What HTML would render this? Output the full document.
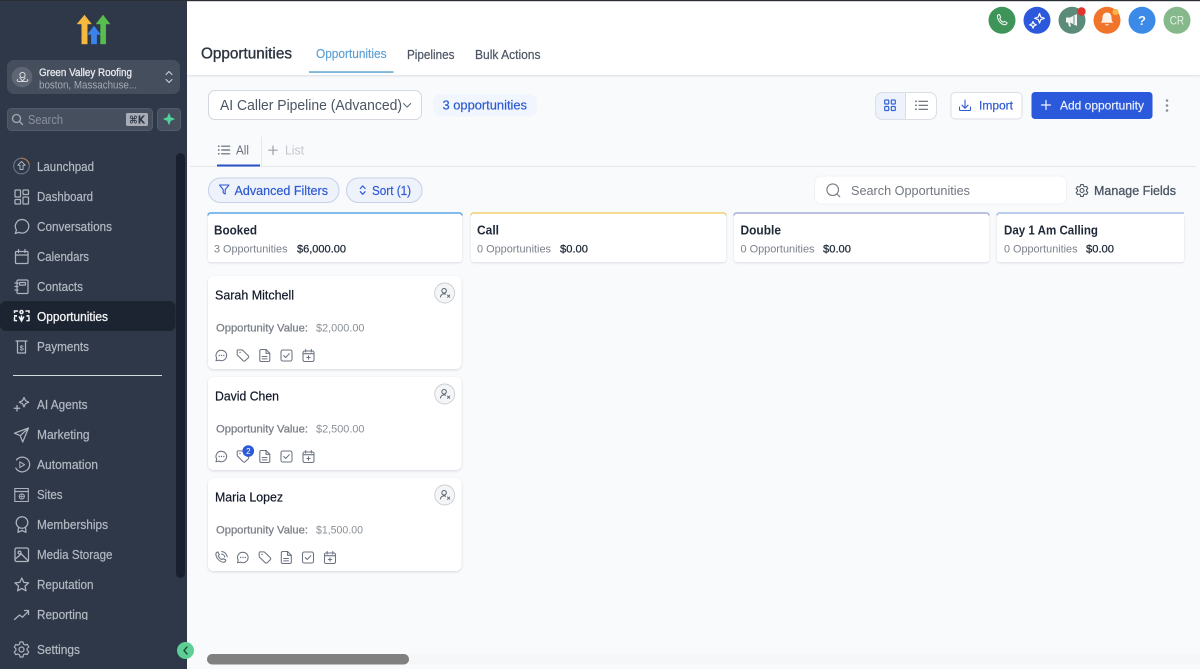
<!DOCTYPE html>
<html lang="en">
<head>
<meta charset="utf-8">
<title>Opportunities</title>
<style>
html,body{margin:0;padding:0;width:1200px;height:669px;overflow:hidden;background:#f9fafc}
svg{display:block;filter:blur(.3px)}
text{font-family:"Liberation Sans",sans-serif;white-space:pre}
.nav{font-size:13px;fill:#b4bac4;stroke:#b4bac4;stroke-width:.2}
.ic{fill:none;stroke:#aeb4bf;stroke-width:1.25;stroke-linecap:round;stroke-linejoin:round}
.ci{fill:none;stroke:#6b7280;stroke-width:1.05;stroke-linecap:round;stroke-linejoin:round}
.blue{fill:#2f5bd3;stroke:#2f5bd3;stroke-width:.2}
.tt{font-size:13px;font-weight:700;fill:#1f2937}
.sub{font-size:11px;fill:#7b818b}
.amt{font-size:11px;fill:#1f2937;stroke:#1f2937;stroke-width:.25}
.nm{font-size:13px;fill:#111827;stroke:#111827;stroke-width:.2}
.ov{font-size:11px;fill:#7d828a;stroke:#7d828a;stroke-width:.3}
.vv{font-size:11px;fill:#8a8f97}
</style>
</head>
<body>
<svg xmlns="http://www.w3.org/2000/svg" width="1200" height="669" viewBox="0 0 1200 669">
<defs>
<filter id="sh" x="-5%" y="-20%" width="110%" height="140%"><feDropShadow dx="0" dy="1" stdDeviation="1.2" flood-color="#101828" flood-opacity=".14"/></filter>
<filter id="hs" x="-2%" y="-20%" width="104%" height="140%"><feDropShadow dx="0" dy="1" stdDeviation="1" flood-color="#101828" flood-opacity=".12"/></filter>
<g id="chat"><path d="M0-5.2a5.2 5.2 0 1 1-2.5 9.800L-5.500 5.300l.7-2.700A5.200 5.200 0 0 1 0-5.200z"/><path d="M-2.300 0h.01M0 0h.01M2.300 0h.01" stroke-width="1.400"/></g>
<g id="tag"><path d="M-5.800-4.600a1 1 0 0 1 1-1H-1.300a1.500 1.500 0 0 1 1 .4L5.300.200a1.400 1.400 0 0 1 0 2L2.200 5.300a1.400 1.400 0 0 1-2 0L-5.400-.300a1.500 1.500 0 0 1-.4-1z"/><path d="M-3-3h.01" stroke-width="1.400"/></g>
<g id="doc"><path d="M-4-6H1L4.800-2.200V4.500A1.500 1.500 0 0 1 3.300 6H-4A1.500 1.500 0 0 1-5.200 4.500V-4.500A1.500 1.500 0 0 1-4-6z"/><path d="M1-6v3.800h3.800M-2.800 1h4.800M-2.800 3.400h4.800"/></g>
<g id="chk"><rect x="-5.500" y="-5.500" width="11" height="11" rx="1.800"/><path d="M-2.800 0l2 2 3.600-3.800"/></g>
<g id="cal"><rect x="-5.500" y="-4.500" width="11" height="10.500" rx="1.600"/><path d="M-5.500-1.800H5.500M-2.800-6v2.500M2.800-6v2.500M0 .3v3.400M-1.700 2H1.700"/></g>
<g id="phn"><path d="M-5.600-3.800c.3-1 1.200-1.700 2-1.700l1.400 2.700-1 1.100c.6 1.700 2 3.100 3.700 3.800l1.100-1L4.300 2.500c0 1-.7 1.900-1.700 2.200C-1.500 5-6 .200-5.600-3.800z"/><path d="M0-3.500A3.500 3.500 0 0 1 3.200-.4M.2-6A6 6 0 0 1 5.700-.6"/></g>
<g id="usr"><circle cx="-1" cy="-2.500" r="2.500"/><path d="M-5 4.500c0-2.300 1.800-3.500 4-3.500 .7 0 1.200.1 1.700.3M2.800 2.300l2.400 2.400M5.200 2.300L2.800 4.700"/></g>
<g id="gear"><circle r="2"/><path d="M-1.200-6h2.400l.4 1.700 1.300.7 1.700-.5 1.200 2.100-1.300 1.200v1.500l1.300 1.200-1.200 2.100-1.700-.5-1.300.7L1.200 6h-2.400l-.4-1.700-1.300-.7-1.700.5-1.200-2.100 1.300-1.200v-1.500l-1.300-1.200 1.200-2.100 1.700.5 1.300-.7z"/></g>
<g id="lst"><path d="M-2.500-4H6M-2.500 0H6M-2.500 4H6"/><path d="M-5.500-4h.01M-5.500 0h.01M-5.500 4h.01" stroke-width="1.800"/></g>
</defs>

<rect width="1200" height="669" fill="#f9fafc"/>
<rect x="187" y="0" width="1013" height="75" fill="#fff" filter="url(#hs)"/>
<rect x="0" y="0" width="1200" height="1.200" fill="#2a2d33"/>

<!-- sidebar -->
<rect x="0" y="1" width="187" height="668" fill="#2f3848"/>

<!-- logo -->
<path d="M81.700 44V24H77L84.500 15 91.500 24H87.300v20z" fill="#f5b93f" stroke="#f5b93f" stroke-width=".4" stroke-linejoin="round"/>
<path d="M91.300 44V34.500H87.500L94 26l6.500 8.500H96.700V44z" fill="#3b82ea" stroke="#3b82ea" stroke-width=".4" stroke-linejoin="round"/>
<path d="M100.500 44V24H96L103 15l7 9H105.800v20z" fill="#58bd4f" stroke="#58bd4f" stroke-width=".4" stroke-linejoin="round"/>

<!-- location -->
<rect x="7" y="60" width="173" height="34" rx="7" fill="#454e5d"/>
<circle cx="22" cy="77" r="10.300" fill="#5e6674"/>
<g fill="none" stroke="#d5d8de" stroke-width="1"><circle cx="22.500" cy="75" r="2.600"/><path d="M22.500 81l-3-3.600M22.500 81l3-3.600M18 79.500c-1.300.4-1 2 .5 2h8c1.500 0 1.800-1.600.5-2"/></g>
<text x="39" y="76" font-size="11" fill="#e8eaee" stroke="#e8eaee" stroke-width=".3" textLength="93" lengthAdjust="spacingAndGlyphs">Green Valley Roofing</text>
<text x="39" y="88.500" font-size="11" fill="#a3a9b4" textLength="98" lengthAdjust="spacingAndGlyphs">boston, Massachuse...</text>
<path d="M166 74.500l3-3 3 3M166 79.500l3 3 3-3" fill="none" stroke="#d3d6dc" stroke-width="1" stroke-linecap="round" stroke-linejoin="round"/>

<!-- search -->
<rect x="7.500" y="108.500" width="145" height="22" rx="4" fill="#464f5e" stroke="#535c6b"/>
<circle cx="16.500" cy="118.500" r="4" fill="none" stroke="#a3a9b4" stroke-width="1.300"/>
<path d="M19.500 121.500l3 3" stroke="#a3a9b4" stroke-width="1.300" stroke-linecap="round"/>
<text x="28" y="124" font-size="13" fill="#8b919d" textLength="35" lengthAdjust="spacingAndGlyphs">Search</text>
<rect x="126" y="113" width="22" height="13" rx="1.500" fill="#a7acb5"/>
<text x="129" y="123.500" font-size="10.500" font-weight="700" fill="#2e3747" style="font-family:'DejaVu Sans',sans-serif" textLength="16" lengthAdjust="spacingAndGlyphs">⌘K</text>
<rect x="157.500" y="108.500" width="23" height="22" rx="4" fill="#464f5e" stroke="#535c6b"/>
<path d="M169 113.500l1.500 4 3.800 1.500-3.800 1.500-1.500 4-1.500-4-3.800-1.500 3.800-1.500z" fill="#4fd39a" stroke="#4fd39a" stroke-width=".7" stroke-linejoin="round"/>

<!-- scrollbar -->
<rect x="176" y="153" width="9" height="425" rx="4.500" fill="#1a202e"/>
<!-- active -->
<rect x="0" y="301" width="175.500" height="30" rx="6" fill="#1c2331"/>
<!-- divider -->
<rect x="13" y="375" width="149" height="1" fill="#d5d9e1"/>

<!-- nav icons -->
<g class="ic">
 <circle cx="21.500" cy="166" r="7.800" stroke="#667080"/>
 <path d="M21.500 158.200A7.800 7.800 0 0 1 29 164" stroke="#a8724c" fill="none"/>
 <path d="M21.500 161.500l-3.700 3.700h2.200v4.300h3v-4.300h2.200z" stroke-width="1"/>
 <rect x="15" y="190" width="5.500" height="7" rx=".8"/><rect x="23" y="190" width="5.500" height="4.500" rx=".8"/><rect x="15" y="199.500" width="5.500" height="4.500" rx=".8"/><rect x="23" y="197" width="5.500" height="7" rx=".8"/>
 <path d="M22 219.500a6.800 6.800 0 0 1 0 13.600c-1.200 0-2.300-.3-3.200-.8L15.300 233.500l1.200-3.400A6.800 6.800 0 0 1 22 219.500z"/>
 <rect x="15.500" y="251.500" width="12.500" height="12" rx="1"/><path d="M15.500 255H28M18.500 249.500v3M25 249.500v3"/>
 <rect x="17" y="280" width="11" height="13.500" rx="1.300"/><rect x="19.500" y="282.500" width="6" height="2.600" rx=".6"/><path d="M15 283h3M15 286.500h3M15 290h3"/>
 <path d="M16 341h11M17.500 341v12h8v-12"/>
 <path d="M24 397.500l1.500 3.200 3.200 1.500-3.200 1.500-1.500 3.200-1.500-3.200-3.200-1.500 3.200-1.500zM17 405.500v5.500M14.200 408.200H19.800"/>
 <path d="M28.500 428l-14 5.200 5.700 2.500 2.500 6.300zM20.200 435.700l8.300-7.700"/>
 <path d="M16.500 459.800a7.400 7.400 0 1 1-.7 8.300"/><path d="M19.800 461.800l4.800 2.900-4.800 2.900z" stroke-width="1"/>
 <rect x="14.800" y="488.500" width="13.500" height="13" stroke-width="1.100"/><path d="M14.800 491.500h13.500"/><circle cx="21.800" cy="496.500" r="2.600" stroke-width="1"/><path d="M19.200 496.500H24.400M21.800 494v5" stroke-width=".8"/>
 <circle cx="22" cy="522.500" r="5.800"/><path d="M18.500 527.500l-.5 4.800 4-1.800 4 1.800-.5-4.800"/>
 <rect x="15" y="548" width="13.500" height="13.500" rx="1.500"/><circle cx="19.500" cy="552.500" r="1.400"/><path d="M15.300 559l6-5 7 7"/>
 <path d="M21.800 578l2 4.400 4.800.5-3.600 3.200 1 4.700-4.200-2.400-4.200 2.400 1-4.700-3.600-3.200 4.800-.5z"/>
 <path d="M14.500 619.500l5-4.500 3 2.200 6-6.200M24.500 610.500h4v4"/>
 <use href="#gear" transform="translate(21.500,649.500) scale(1.250)" stroke-width=".95"/>
</g>
<text x="19.600" y="350.500" font-size="7.500" font-weight="700" fill="#aeb4bf">$</text>
<g fill="none" stroke="#f1f3f6" stroke-width="1.500" stroke-linecap="round">
 <circle cx="21.500" cy="312" r="1.500"/>
 <path d="M21.500 316v5M19.300 317l2.200 4 2.200-4"/>
 <path d="M14.500 312.500v-1.500h3M29 312.500v-1.500h-3M14.500 317.500v3l2 .2M29 317.500v3l-2 .2"/>
</g>
<rect x="14" y="315" width="3" height="1.800" fill="#f1f3f6"/><rect x="26.500" y="315" width="3" height="1.800" fill="#f1f3f6"/>

<!-- nav text -->
<text class="nav" x="37" y="171" textLength="57" lengthAdjust="spacingAndGlyphs">Launchpad</text>
<text class="nav" x="37" y="201" textLength="56" lengthAdjust="spacingAndGlyphs">Dashboard</text>
<text class="nav" x="37" y="231" textLength="75" lengthAdjust="spacingAndGlyphs">Conversations</text>
<text class="nav" x="37" y="261" textLength="52" lengthAdjust="spacingAndGlyphs">Calendars</text>
<text class="nav" x="37" y="291" textLength="46" lengthAdjust="spacingAndGlyphs">Contacts</text>
<text class="nav" x="37" y="321" textLength="71" lengthAdjust="spacingAndGlyphs" style="fill:#f3f4f6;stroke:#f3f4f6;stroke-width:.3">Opportunities</text>
<text class="nav" x="37" y="351" textLength="52" lengthAdjust="spacingAndGlyphs">Payments</text>
<text class="nav" x="37" y="409" textLength="50.500" lengthAdjust="spacingAndGlyphs">AI Agents</text>
<text class="nav" x="37" y="439" textLength="52.500" lengthAdjust="spacingAndGlyphs">Marketing</text>
<text class="nav" x="37" y="469" textLength="61" lengthAdjust="spacingAndGlyphs">Automation</text>
<text class="nav" x="37" y="499" textLength="25.500" lengthAdjust="spacingAndGlyphs">Sites</text>
<text class="nav" x="37" y="529" textLength="71" lengthAdjust="spacingAndGlyphs">Memberships</text>
<text class="nav" x="37" y="559" textLength="75.500" lengthAdjust="spacingAndGlyphs">Media Storage</text>
<text class="nav" x="37" y="589" textLength="56.500" lengthAdjust="spacingAndGlyphs">Reputation</text>
<text class="nav" x="37" y="619" textLength="51" lengthAdjust="spacingAndGlyphs">Reporting</text>
<rect x="30" y="620" width="70" height="5" fill="#2f3848"/>
<text class="nav" x="37" y="654" textLength="43" lengthAdjust="spacingAndGlyphs">Settings</text>

<!-- collapse -->
<circle cx="185.500" cy="650.500" r="8.500" fill="#5dcf94"/>
<path d="M187 647l-3 3.500 3 3.500" fill="none" stroke="#1f4d3a" stroke-width="1.400" stroke-linecap="round" stroke-linejoin="round"/>

<!-- header -->
<text x="201" y="58.500" font-size="16" fill="#2d3440" stroke="#2d3440" stroke-width=".35" textLength="91" lengthAdjust="spacingAndGlyphs">Opportunities</text>
<text x="316" y="58" font-size="12.500" fill="#5b9fd4" stroke="#5b9fd4" stroke-width=".15" textLength="70.500" lengthAdjust="spacingAndGlyphs">Opportunities</text>
<rect x="309" y="71.300" width="84.500" height="1.500" fill="#5ba3d0"/>
<text x="407" y="59" font-size="12.500" fill="#4b5563" stroke="#4b5563" stroke-width=".2" textLength="47.500" lengthAdjust="spacingAndGlyphs">Pipelines</text>
<text x="475" y="59" font-size="12.500" fill="#4b5563" stroke="#4b5563" stroke-width=".2" textLength="65.500" lengthAdjust="spacingAndGlyphs">Bulk Actions</text>

<!-- top icons -->
<circle cx="1002" cy="20.300" r="13.500" fill="#3e9459"/>
<path d="M997.500 15.500c.5-.7 1.400-1 2-.8l1.200 2.700-1 1.100c.7 1.700 1.900 3 3.500 3.800l1.200-1 2.600 1.400c0 .8-.6 1.500-1.400 1.900-3.800.8-8.700-4.500-8.100-9.100z" fill="none" stroke="#e9f3ec" stroke-width="1.100" stroke-linejoin="round"/>
<circle cx="1037" cy="20.300" r="13.500" fill="#2c59dc"/>
<path d="M1039.500 13.500l1.300 3.500 3.500 1.300-3.500 1.300-1.300 3.500-1.300-3.500-3.500-1.300 3.500-1.300zM1033 21.500l1 2.300 2.300 1-2.300 1-1 2.300-1-2.300-2.300-1 2.300-1z" fill="none" stroke="#fff" stroke-width="1.200" stroke-linejoin="round"/>
<circle cx="1072" cy="20.300" r="13.500" fill="#5b8b79"/>
<path d="M1066 17.500h4l7-3.500v12l-7-3.500h-4z" fill="#f2f5f4"/><path d="M1068 22.500l1 4h2l-1-4z" fill="#f2f5f4"/><rect x="1073" y="16" width="2" height="8" fill="#5b8b79" opacity=".45"/>
<circle cx="1081.500" cy="11.500" r="4.200" fill="#e0342c"/>
<circle cx="1107" cy="20.300" r="13.500" fill="#f0752a"/>
<path d="M1107 12.500c-3 0-4.500 2.300-4.500 5 0 2.800-.7 4-1.800 5.300h12.600c-1.100-1.300-1.800-2.500-1.800-5.300 0-2.700-1.500-5-4.500-5z" fill="#fdf2ea"/><path d="M1105 24.200a2.200 2.200 0 0 0 4 0z" fill="#fdf2ea"/>
<rect x="1112.500" y="9" width="6" height="6" rx="2.500" fill="#f6b545"/>
<circle cx="1142" cy="20.300" r="13.500" fill="#3b8ae8"/>
<text x="1142" y="25" font-size="13" font-weight="700" fill="#eef5fe" text-anchor="middle">?</text>
<circle cx="1177" cy="20.300" r="13.500" fill="#85b88b"/>
<text x="1169.700" y="24.700" font-size="12" fill="#e6f1e7" textLength="14.500" lengthAdjust="spacingAndGlyphs">CR</text>

<!-- pipeline select -->
<rect x="208.500" y="90.500" width="213" height="29" rx="6.500" fill="#fff" stroke="#d3d7de"/>
<text x="220" y="110" font-size="14.500" fill="#4b5563" textLength="182" lengthAdjust="spacingAndGlyphs">AI Caller Pipeline (Advanced)</text>
<path d="M403.500 103.500l3.600 3.600 3.600-3.600" fill="none" stroke="#5b6470" stroke-width="1" stroke-linecap="round" stroke-linejoin="round"/>
<rect x="433" y="94" width="104" height="22.500" rx="8" fill="#f1f5fd"/>
<text class="blue" x="442.500" y="109.500" font-size="12.500" textLength="84.500" lengthAdjust="spacingAndGlyphs">3 opportunities</text>

<!-- view toggle -->
<rect x="875.500" y="92.500" width="61" height="27" rx="7" fill="#fff" stroke="#dadee5"/>
<path d="M882.500 92.500H905.500V119.500H882.500a7 7 0 0 1-7-7V99.500a7 7 0 0 1 7-7z" fill="#eef2fb" stroke="#dadee5"/>
<g fill="none" stroke="#3563d6" stroke-width="1.200"><rect x="884.700" y="100" width="4" height="4" rx=".8"/><rect x="891.300" y="100" width="4" height="4" rx=".8"/><rect x="884.700" y="106.500" width="4" height="4" rx=".8"/><rect x="891.300" y="106.500" width="4" height="4" rx=".8"/></g>
<use href="#lst" transform="translate(921.500,105.300)" fill="none" stroke="#606873" stroke-width="1.200" stroke-linecap="round"/>

<!-- import -->
<rect x="951" y="92.500" width="71" height="26.500" rx="4" fill="#fff" stroke="#dadee5"/>
<path d="M965 100v8M962 105.200l3 3 3-3M959.500 107v2.500a1 1 0 0 0 1 1h9a1 1 0 0 0 1-1V107" fill="none" stroke="#2f5bd3" stroke-width="1.100" stroke-linecap="round" stroke-linejoin="round"/>
<text class="blue" x="979" y="109.500" font-size="12" textLength="34" lengthAdjust="spacingAndGlyphs">Import</text>
<!-- add -->
<rect x="1031.500" y="92" width="121" height="27" rx="3.500" fill="#2b59dc"/>
<path d="M1046 100.500v9M1041.500 105h9" stroke="#f2f5fd" stroke-width="1.200" stroke-linecap="round"/>
<text x="1060" y="109.500" font-size="12" fill="#f0f4fd" stroke="#f0f4fd" stroke-width=".15" textLength="84" lengthAdjust="spacingAndGlyphs">Add opportunity</text>
<circle cx="1167" cy="100.500" r="1.300" fill="#8b8f97"/><circle cx="1167" cy="105.500" r="1.300" fill="#8b8f97"/><circle cx="1167" cy="110.500" r="1.300" fill="#8b8f97"/>

<!-- tabs -->
<rect x="190" y="166" width="1006" height="1" fill="#e6e8ec"/>
<rect x="261" y="137" width="1" height="29" fill="#e6e8ec"/>
<rect x="217" y="164.500" width="43" height="2" fill="#2b50c8"/>
<use href="#lst" transform="translate(224,150) scale(.95)" fill="none" stroke="#5f6772" stroke-width="1.200" stroke-linecap="round"/>
<text x="236" y="154.500" font-size="12.500" fill="#6b7280" textLength="13" lengthAdjust="spacingAndGlyphs">All</text>
<path d="M273 146v8.500M268.700 150.200h8.500" stroke="#9aa0a8" stroke-width="1.200" stroke-linecap="round"/>
<text x="285" y="154.500" font-size="12.500" fill="#c2c6cd" textLength="19" lengthAdjust="spacingAndGlyphs">List</text>

<!-- filter pills -->
<rect x="208.500" y="178" width="130.500" height="24.500" rx="12" fill="#eef2fb" stroke="#c6d0e6"/>
<path d="M219.500 185h9.500l-3.800 4.600v4.500l-2-1.300v-3.200z" fill="none" stroke="#2f5bd3" stroke-width="1.100" stroke-linejoin="round"/>
<text class="blue" x="234.500" y="195" font-size="12.500" textLength="93.500" lengthAdjust="spacingAndGlyphs">Advanced Filters</text>
<rect x="346.500" y="178" width="75.500" height="24.500" rx="12" fill="#eef2fb" stroke="#c6d0e6"/>
<path d="M360.300 188.500l2.400-2.600 2.400 2.600M360.300 191.700l2.400 2.600 2.400-2.600" fill="none" stroke="#2f5bd3" stroke-width="1.200" stroke-linecap="round" stroke-linejoin="round"/>
<text class="blue" x="372" y="195" font-size="12.500" textLength="39" lengthAdjust="spacingAndGlyphs">Sort (1)</text>

<!-- search opportunities -->
<rect x="814.500" y="176" width="252" height="28" rx="7" fill="#fff" stroke="#f0f1f4"/>
<circle cx="832.700" cy="189.700" r="5.800" fill="none" stroke="#757b85" stroke-width="1.100"/>
<path d="M837 194l2.800 2.800" stroke="#757b85" stroke-width="1.100" stroke-linecap="round"/>
<text x="851" y="195" font-size="12.500" fill="#71767f" textLength="119" lengthAdjust="spacingAndGlyphs">Search Opportunities</text>
<use href="#gear" transform="translate(1082,190.500)" fill="none" stroke="#4b5563" stroke-width="1.100" stroke-linejoin="round"/>
<text x="1094" y="195" font-size="12.500" fill="#4b5563" stroke="#4b5563" stroke-width=".3" textLength="82" lengthAdjust="spacingAndGlyphs">Manage Fields</text>

<!-- columns -->
<g filter="url(#hs)" fill="#fff">
 <rect x="208" y="213" width="254" height="49" rx="3"/>
 <rect x="471" y="213" width="255" height="49" rx="3"/>
 <rect x="734" y="213" width="255" height="49" rx="3"/>
 <rect x="997" y="213" width="187" height="49" rx="3"/>
</g>
<path d="M208 215.500a2.500 2.500 0 0 1 2.500-2.500h249a2.500 2.500 0 0 1 2.500 2.500" fill="none" stroke="#5aa5e8" stroke-width="1.500"/>
<path d="M471 215.500a2.500 2.500 0 0 1 2.500-2.500h250a2.500 2.500 0 0 1 2.500 2.500" fill="none" stroke="#f3cf6f" stroke-width="1.500"/>
<path d="M734 215.500a2.500 2.500 0 0 1 2.500-2.500h250a2.500 2.500 0 0 1 2.500 2.500" fill="none" stroke="#a8add8" stroke-width="1.500"/>
<path d="M997 215.500a2.500 2.500 0 0 1 2.500-2.500H1184" fill="none" stroke="#a9bde8" stroke-width="1.500"/>

<text class="tt" x="214" y="234.500" textLength="43" lengthAdjust="spacingAndGlyphs">Booked</text>
<text class="sub" x="214" y="252.300" textLength="73.500" lengthAdjust="spacingAndGlyphs">3 Opportunities</text>
<text class="amt" x="297" y="252.300" textLength="49" lengthAdjust="spacingAndGlyphs">$6,000.00</text>
<text class="tt" x="477" y="234.500" textLength="22" lengthAdjust="spacingAndGlyphs">Call</text>
<text class="sub" x="477" y="252.300" textLength="74" lengthAdjust="spacingAndGlyphs">0 Opportunities</text>
<text class="amt" x="560" y="252.300" textLength="28" lengthAdjust="spacingAndGlyphs">$0.00</text>
<text class="tt" x="740.500" y="234.500" textLength="40.500" lengthAdjust="spacingAndGlyphs">Double</text>
<text class="sub" x="740.500" y="252.300" textLength="74" lengthAdjust="spacingAndGlyphs">0 Opportunities</text>
<text class="amt" x="823" y="252.300" textLength="28" lengthAdjust="spacingAndGlyphs">$0.00</text>
<text class="tt" x="1004" y="234.500" textLength="94" lengthAdjust="spacingAndGlyphs">Day 1 Am Calling</text>
<text class="sub" x="1004" y="252.300" textLength="73.500" lengthAdjust="spacingAndGlyphs">0 Opportunities</text>
<text class="amt" x="1086" y="252.300" textLength="28" lengthAdjust="spacingAndGlyphs">$0.00</text>

<!-- cards -->
<g filter="url(#sh)" fill="#fff">
 <rect x="208" y="276" width="253.500" height="93" rx="6"/>
 <rect x="208" y="377" width="253.500" height="93" rx="6"/>
 <rect x="208" y="478" width="253.500" height="93" rx="6"/>
</g>
<text class="nm" x="215" y="299.500" textLength="79" lengthAdjust="spacingAndGlyphs">Sarah Mitchell</text>
<circle cx="444.700" cy="293" r="10" fill="#f4f5f7" stroke="#c9cdd3" stroke-width=".9"/>
<use href="#usr" transform="translate(445,293) scale(.9)" fill="none" stroke="#5b6470" stroke-width="1.100" stroke-linecap="round"/>
<text class="ov" x="216" y="331.700" textLength="92" lengthAdjust="spacingAndGlyphs">Opportunity Value:</text>
<text class="vv" x="316" y="331.700" textLength="48.500" lengthAdjust="spacingAndGlyphs">$2,000.00</text>
<g class="ci"><use href="#chat" x="221.500" y="355.500"/><use href="#tag" x="243" y="355.500"/><use href="#doc" x="265" y="355.500"/><use href="#chk" x="286.500" y="355.500"/><use href="#cal" x="308.500" y="355.500"/></g>

<text class="nm" x="215" y="400.500" textLength="64" lengthAdjust="spacingAndGlyphs">David Chen</text>
<circle cx="444.700" cy="394" r="10" fill="#f4f5f7" stroke="#c9cdd3" stroke-width=".9"/>
<use href="#usr" transform="translate(445,394) scale(.9)" fill="none" stroke="#5b6470" stroke-width="1.100" stroke-linecap="round"/>
<text class="ov" x="216" y="432.700" textLength="92" lengthAdjust="spacingAndGlyphs">Opportunity Value:</text>
<text class="vv" x="316" y="432.700" textLength="48.500" lengthAdjust="spacingAndGlyphs">$2,500.00</text>
<g class="ci"><use href="#chat" x="221.500" y="456.500"/><use href="#tag" x="243" y="456.500"/><use href="#doc" x="265" y="456.500"/><use href="#chk" x="286.500" y="456.500"/><use href="#cal" x="308.500" y="456.500"/></g>
<circle cx="248.300" cy="451" r="5.800" fill="#2c59dc"/>
<text x="248.300" y="454" font-size="8" fill="#fff" text-anchor="middle">2</text>

<text class="nm" x="215" y="501.500" textLength="68" lengthAdjust="spacingAndGlyphs">Maria Lopez</text>
<circle cx="444.700" cy="495" r="10" fill="#f4f5f7" stroke="#c9cdd3" stroke-width=".9"/>
<use href="#usr" transform="translate(445,495) scale(.9)" fill="none" stroke="#5b6470" stroke-width="1.100" stroke-linecap="round"/>
<text class="ov" x="216" y="533.700" textLength="92" lengthAdjust="spacingAndGlyphs">Opportunity Value:</text>
<text class="vv" x="316" y="533.700" textLength="47" lengthAdjust="spacingAndGlyphs">$1,500.00</text>
<g class="ci"><use href="#phn" x="221.500" y="557.500"/><use href="#chat" x="243" y="557.500"/><use href="#tag" x="265" y="557.500"/><use href="#doc" x="286.500" y="557.500"/><use href="#chk" x="308" y="557.500"/><use href="#cal" x="330" y="557.500"/></g>

<!-- h scrollbar -->
<rect x="409" y="654" width="791" height="10" fill="#f6f7f8"/>
<rect x="207" y="654" width="202" height="10.500" rx="5" fill="#808080"/>
</svg>
</body>
</html>
